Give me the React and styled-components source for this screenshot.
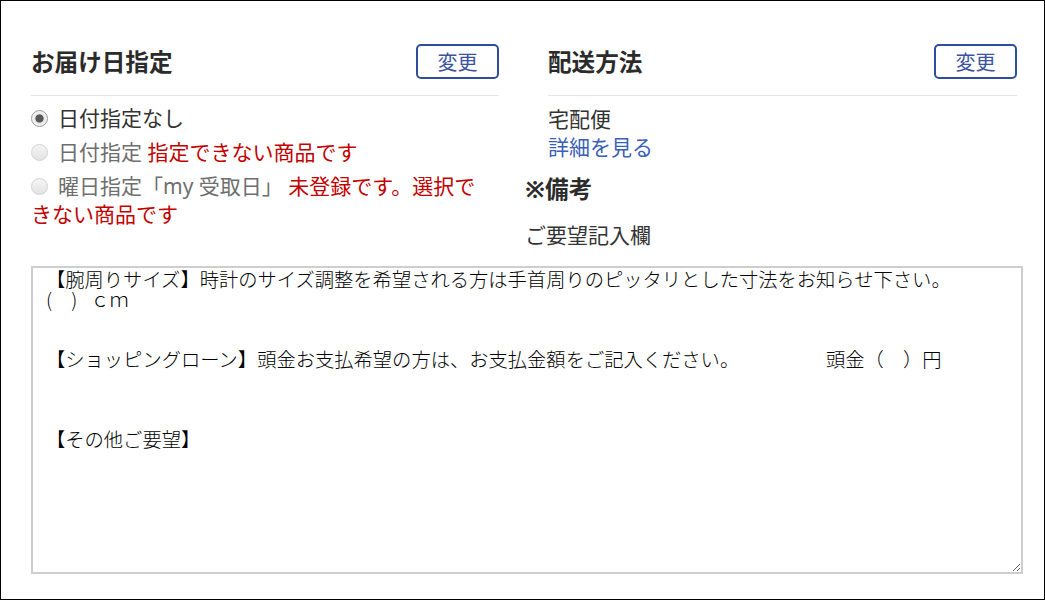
import React from "react";
import styled, { createGlobalStyle } from "styled-components";

const GlobalStyle = createGlobalStyle`
  html, body { margin: 0; padding: 0; background: #fff; }
  * { box-sizing: border-box; }
`;

const Page = styled.div`
  width: 1045px;
  height: 600px;
  border: 1px solid #000;
  padding: 43px 0 0 30px;
  font-family: "Noto Sans", "Noto Sans CJK JP", sans-serif;
  color: #333;
  background: #fff;
`;

const Top = styled.div`
  display: grid;
  grid-template-columns: 468px 492px;
  column-gap: 26px;
  align-items: start;
`;

const Column = styled.div`
  display: flex;
  flex-direction: column;
`;

const Shipping = styled.section`
  padding-left: 23px;
`;

const SectionHeader = styled.div`
  display: flex;
  justify-content: space-between;
  align-items: center;
  padding-bottom: 16px;
  border-bottom: 1px solid #e6e6e6;
`;

const Title = styled.h2`
  margin: 0;
  font-size: 23.6px;
  line-height: 30px;
  font-weight: 700;
  color: #2b2b2b;
`;

const ChangeButton = styled.button`
  width: 83px;
  height: 35px;
  padding: 0;
  background: #fff;
  border: 2px solid #2e4d9c;
  border-radius: 5px;
  color: #3a52a0;
  font-family: "Noto Sans CJK JP", sans-serif;
  font-size: 20px;
  line-height: 1;
  cursor: pointer;
`;

const OptionList = styled.div`
  margin-top: 8px;
  display: flex;
  flex-direction: column;
  gap: 6px;
`;

const Option = styled.div`
  font-size: 21px;
  line-height: 28px;
  color: ${(p) => (p.$disabled ? "#6e6e6e" : "#333")};
`;

const Radio = styled.span`
  display: inline-block;
  width: 17px;
  height: 17px;
  margin-right: 10px;
  border-radius: 50%;
  vertical-align: -1px;
  border: 1px solid ${(p) => (p.$checked ? "#9a9a9a" : "#d2d2d2")};
  background: ${(p) =>
    p.$checked
      ? "radial-gradient(circle at 50% 50%, #575757 0, #575757 3.6px, #e9e9e9 4.6px, #f6f6f6 100%)"
      : "linear-gradient(#f5f5f5, #e3e3e3)"};
  box-shadow: ${(p) => (p.$checked ? "inset 0 0 0 1px #f3f3f3" : "none")};
`;

const Warn = styled.span`
  color: #c20000;
`;

const ShipBody = styled.div`
  margin-top: 9px;
  font-size: 21px;
  line-height: 28px;
  color: #333;
`;

const DetailLink = styled.a`
  display: block;
  color: #3a5fb8;
  text-decoration: none;
`;

const NotesTitle = styled.h3`
  margin: 13px 0 0;
  font-size: 23.6px;
  line-height: 30px;
  font-weight: 700;
  color: #2b2b2b;
`;

const NotesLabel = styled.div`
  margin-top: 17px;
  font-size: 21px;
  line-height: 28px;
  color: #333;
`;

const NotesArea = styled.textarea`
  display: block;
  margin-top: 17px;
  width: 992px;
  height: 308px;
  padding: 1px 13px;
  border: 2px solid #cecece;
  border-radius: 0;
  outline: none;
  background: #fff;
  color: #000;
  font-family: "Noto Sans CJK JP", sans-serif;
  font-size: 19.3px;
  font-weight: 300;
  line-height: 20px;
  resize: both;
`;

const notesText =
  "【腕周りサイズ】時計のサイズ調整を希望される方は手首周りのピッタリとした寸法をお知らせ下さい。\n" +
  "(　)   ｃｍ\n" +
  "\n" +
  "\n" +
  "【ショッピングローン】頭金お支払希望の方は、お支払金額をご記入ください。　　　　　頭金（　）円\n" +
  "\n" +
  "\n" +
  "\n" +
  "【その他ご要望】";

export default function App() {
  return (
    <>
      <GlobalStyle />
      <Page>
        <Top>
          <Column>
            <SectionHeader>
              <Title>お届け日指定</Title>
              <ChangeButton>変更</ChangeButton>
            </SectionHeader>
            <OptionList>
              <Option>
                <Radio $checked />
                日付指定なし
              </Option>
              <Option $disabled>
                <Radio />
                日付指定 <Warn>指定できない商品です</Warn>
              </Option>
              <Option $disabled>
                <Radio />
                曜日指定「my 受取日」 <Warn>未登録です。選択で<br />きない商品です</Warn>
              </Option>
            </OptionList>
          </Column>
          <Column>
            <Shipping>
              <SectionHeader>
                <Title>配送方法</Title>
                <ChangeButton>変更</ChangeButton>
              </SectionHeader>
              <ShipBody>
                <div>宅配便</div>
                <DetailLink href="#">詳細を見る</DetailLink>
              </ShipBody>
            </Shipping>
            <NotesTitle>※備考</NotesTitle>
            <NotesLabel>ご要望記入欄</NotesLabel>
          </Column>
        </Top>
        <NotesArea defaultValue={notesText} />
      </Page>
    </>
  );
}
